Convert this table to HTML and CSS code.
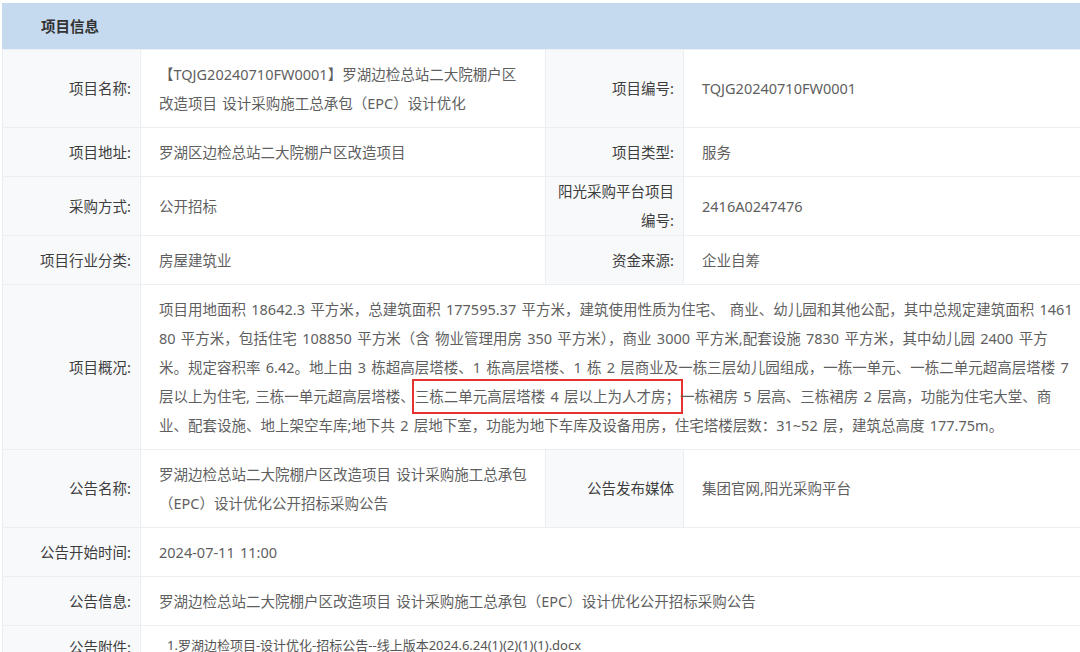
FILE: index.html
```html
<!DOCTYPE html>
<html lang="zh-CN">
<head>
<meta charset="utf-8">
<title>项目信息</title>
<link rel="stylesheet" href="styles.css">
</head>
<body>
<div class="panel">
  <div class="panel-head">项目信息</div>
  <table class="info">
    <colgroup>
      <col class="c-label">
      <col class="c-value">
      <col class="c-label2">
      <col class="c-value2">
    </colgroup>
    <tbody>
      <tr>
        <th>项目名称:</th>
        <td>【TQJG20240710FW0001】罗湖边检总站二大院棚户区改造项目 设计采购施工总承包（EPC）设计优化</td>
        <th class="lb2">项目编号:</th>
        <td class="v2">TQJG20240710FW0001</td>
      </tr>
      <tr>
        <th>项目地址:</th>
        <td>罗湖区边检总站二大院棚户区改造项目</td>
        <th class="lb2">项目类型:</th>
        <td class="v2">服务</td>
      </tr>
      <tr>
        <th>采购方式:</th>
        <td>公开招标</td>
        <th class="lb2">阳光采购平台项目编号:</th>
        <td class="v2">2416A0247476</td>
      </tr>
      <tr>
        <th>项目行业分类:</th>
        <td>房屋建筑业</td>
        <th class="lb2">资金来源:</th>
        <td class="v2">企业自筹</td>
      </tr>
      <tr>
        <th>项目概况:</th>
        <td colspan="3" class="wide">项目用地面积 18642.3 平方米，总建筑面积 177595.37 平方米，建筑使用性质为住宅、 商业、幼儿园和其他公配，其中总规定建筑面积 146180 平方米，包括住宅 108850 平方米（含 物业管理用房 350 平方米），商业 3000 平方米,配套设施 7830 平方米，其中幼儿园 2400 平方米。规定容积率 6.42。地上由 3 栋超高层塔楼、1 栋高层塔楼、1 栋 2 层商业及一栋三层幼儿园组成，一栋一单元、一栋二单元超高层塔楼 7 层以上为住宅, 三栋一单元超高层塔楼、<span class="mark">三栋二单元高层塔楼 4 层以上为人才房；</span>一栋裙房 5 层高、三栋裙房 2 层高，功能为住宅大堂、商业、配套设施、地上架空车库;地下共 2 层地下室，功能为地下车库及设备用房，住宅塔楼层数：31~52 层，建筑总高度 177.75m。</td>
      </tr>
      <tr>
        <th>公告名称:</th>
        <td>罗湖边检总站二大院棚户区改造项目 设计采购施工总承包（EPC）设计优化公开招标采购公告</td>
        <th class="lb2">公告发布媒体</th>
        <td class="v2">集团官网,阳光采购平台</td>
      </tr>
      <tr>
        <th>公告开始时间:</th>
        <td colspan="3" class="wide">2024-07-11 11:00</td>
      </tr>
      <tr>
        <th>公告信息:</th>
        <td colspan="3" class="wide">罗湖边检总站二大院棚户区改造项目 设计采购施工总承包（EPC）设计优化公开招标采购公告</td>
      </tr>
      <tr>
        <th class="attach-label">公告附件:</th>
        <td colspan="3" class="wide attach"><a class="file" href="#">1.罗湖边检项目-设计优化-招标公告--线上版本2024.6.24(1)(2)(1)(1).docx</a></td>
      </tr>
    </tbody>
  </table>
</div>
</body>
</html>
```

FILE: styles.css
```css
html, body {
  margin: 0;
  padding: 0;
  background: #ffffff;
  overflow: hidden;
}

body {
  font-family: "Noto Sans", "Noto Sans CJK SC", "Liberation Sans", sans-serif;
  font-size: 14.5px;
  line-height: 29px;
  color: #5f5f5f;
}

.panel {
  width: 1092px;
  padding: 3px 0 0 2px;
}

.panel-head {
  height: 46px;
  line-height: 46px;
  padding-left: 39px;
  background: #c5d9ef;
  color: #333333;
  font-weight: bold;
}

.info {
  width: 100%;
  border-collapse: collapse;
  table-layout: fixed;
}

.c-label { width: 138px; }
.c-value { width: 405px; }
.c-label2 { width: 138px; }

.info th,
.info td {
  border: 1px solid #ebeef2;
  vertical-align: middle;
  word-break: break-all;
}

.info th {
  background: #f8f9fb;
  color: #3d3d3d;
  font-weight: normal;
  text-align: right;
  padding: 0 9px 0 8px;
}

.info th.lb2 {
  padding: 0 9px 0 10px;
}

.info td {
  background: #ffffff;
  text-align: left;
  padding: 9.5px 15px 9.5px 18px;
  word-spacing: 1.5px;
}

.info td.v2 {
  padding-left: 18px;
}

.info td.wide {
  padding-right: 20px;
}

.info td.attach {
  padding-top: 4px;
  vertical-align: top;
}

.info th.attach-label {
  vertical-align: top;
  padding-top: 7px;
}

.mark {
  display: inline-block;
  outline: 2px solid #e5332f;
  outline-offset: 1px;
}

.file {
  display: inline-block;
  padding-left: 8px;
  font-size: 13px;
  color: #555555;
  text-decoration: none;
  line-height: 22px;
  word-spacing: 0;
}
```
